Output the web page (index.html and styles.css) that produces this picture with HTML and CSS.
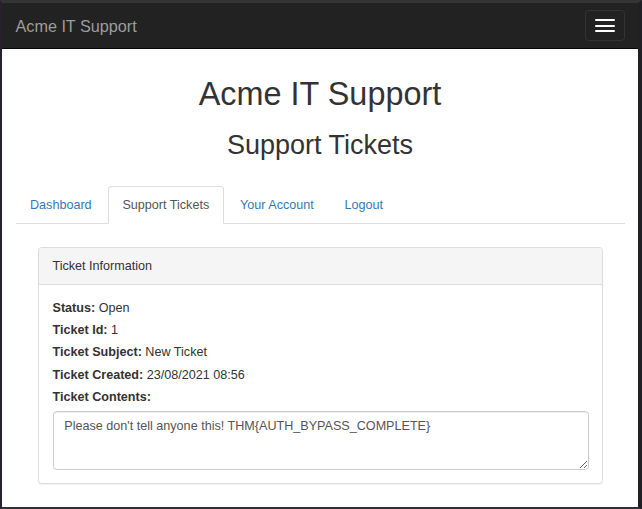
FILE: index.html
```html
<!DOCTYPE html>
<html lang="en">
<head>
<meta charset="utf-8">
<title>Acme IT Support - Support Tickets</title>
<link rel="stylesheet" href="styles.css">
</head>
<body>
<div class="screen">
  <div class="window">
    <nav class="navbar">
      <span class="brand">Acme IT Support</span>
      <button class="toggle" type="button" aria-label="Toggle navigation">
        <span class="bar"></span>
        <span class="bar"></span>
        <span class="bar"></span>
      </button>
    </nav>
    <main class="content">
      <h1 class="title">Acme IT Support</h1>
      <h2 class="subtitle">Support Tickets</h2>
      <ul class="tabs">
        <li class="tab"><a class="tab-link" href="#">Dashboard</a></li>
        <li class="tab"><a class="tab-link active" href="#">Support Tickets</a></li>
        <li class="tab"><a class="tab-link" href="#">Your Account</a></li>
        <li class="tab"><a class="tab-link" href="#">Logout</a></li>
      </ul>
      <section class="panel">
        <div class="panel-heading">Ticket Information</div>
        <div class="panel-body">
          <div class="field"><span class="label">Status:</span> Open</div>
          <div class="field"><span class="label">Ticket Id:</span> 1</div>
          <div class="field"><span class="label">Ticket Subject:</span> New Ticket</div>
          <div class="field"><span class="label">Ticket Created:</span> 23/08/2021 08:56</div>
          <div class="field"><span class="label">Ticket Contents:</span></div>
          <textarea class="contents">Please don't tell anyone this! THM{AUTH_BYPASS_COMPLETE}</textarea>
        </div>
      </section>
    </main>
  </div>
</div>
</body>
</html>
```
FILE: styles.css
```css
* { box-sizing: border-box; }

html, body {
  margin: 0;
  padding: 0;
  background: #26242a;
}

.screen {
  width: 642px;
  height: 509px;
  border-top: 3px solid #343434;
  border-left: 2px solid #2a1f2f;
  border-right: 4px solid #1f1f25;
  border-bottom: 2px solid #303036;
  overflow: hidden;
}

.window {
  height: 100%;
  background: #fff;
  font-family: "Liberation Sans", Arial, sans-serif;
  font-size: 12.6px;
  line-height: 18px;
  color: #333;
}

.navbar {
  height: 45.5px;
  background: #222;
  border-bottom: 1px solid #080808;
  display: flex;
  align-items: center;
  justify-content: space-between;
}

.brand {
  padding-left: 13.5px;
  padding-top: 1.5px;
  font-size: 16.2px;
  line-height: 18px;
  color: #9d9d9d;
}

.toggle {
  width: 39.6px;
  height: 30.6px;
  margin-right: 13.5px;
  margin-top: 1px;
  padding: 0;
  background: transparent;
  border: 1px solid #333;
  border-radius: 3.6px;
  display: flex;
  flex-direction: column;
  align-items: center;
  justify-content: center;
  gap: 3.6px;
}

.bar {
  display: block;
  width: 19.8px;
  height: 1.8px;
  background: #fff;
  border-radius: 1px;
}

.content {
  padding: 0 13.5px;
}

.title {
  margin: 28.5px 0 0;
  font-size: 32.4px;
  line-height: 1.1;
  font-weight: 500;
  text-align: center;
  color: #333;
}

.subtitle {
  margin: 18px 0 0;
  font-size: 27px;
  line-height: 1.1;
  font-weight: 500;
  text-align: center;
  color: #333;
}

.tabs {
  list-style: none;
  margin: 26px 0 0;
  padding: 0;
  display: flex;
  border-bottom: 1px solid #ddd;
}

.tab {
  margin-bottom: -1px;
}

.tab-link {
  display: block;
  margin-right: 1.8px;
  padding: 9px 13.5px;
  line-height: 18px;
  border: 1px solid transparent;
  border-radius: 3.6px 3.6px 0 0;
  color: #337ab7;
  text-decoration: none;
}

.tab-link.active {
  color: #555;
  background: #fff;
  border-color: #ddd #ddd transparent;
}

.panel {
  margin: 22.5px 21.5px 0 22.5px;
  border: 1px solid #ddd;
  border-radius: 3.6px;
  background: #fff;
  box-shadow: 0 1px 1px rgba(0, 0, 0, 0.05);
}

.panel-heading {
  padding: 9px 13.5px;
  line-height: 18px;
  background: #f5f5f5;
  border-bottom: 1px solid #ddd;
  border-radius: 3px 3px 0 0;
  color: #333;
}

.panel-body {
  padding: 14px 13.5px 13.5px;
}

.field {
  line-height: 18px;
  margin-bottom: 4.25px;
}

.field:last-of-type {
  margin-bottom: 5.5px;
}

.label {
  font-weight: 700;
}

.contents {
  display: block;
  width: 100%;
  height: 58.6px;
  margin: 0;
  padding: 4.6px 10.8px;
  font-family: "Liberation Sans", Arial, sans-serif;
  font-size: 12.6px;
  line-height: 18px;
  color: #555;
  background: #fff;
  border: 1px solid #ccc;
  border-radius: 3.6px;
  box-shadow: inset 0 1px 1px rgba(0, 0, 0, 0.075);
}
```
